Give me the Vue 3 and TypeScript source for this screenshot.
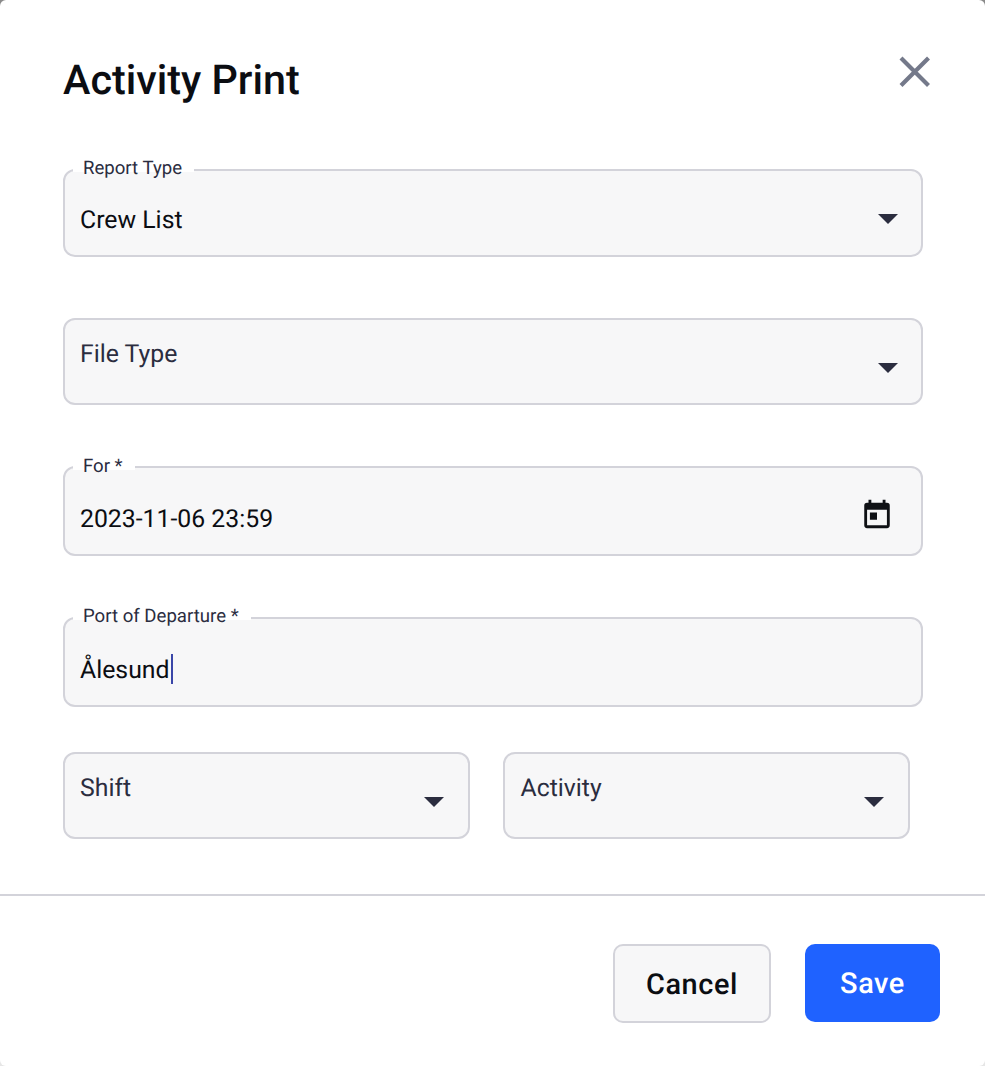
<script setup lang="ts">
const chevron = 'M0 0h20l-10 10z'
</script>

<template>
  <div class="backdrop">
    <div class="dialog">
      <header class="head">
        <h1 class="title">Activity Print</h1>
        <button class="close" aria-label="Close">
          <svg width="34" height="34" viewBox="0 0 34 34"><path d="M3 3 30.5 30.5M30.5 3 3 30.5" stroke="#74798a" stroke-width="4.2" fill="none" /></svg>
        </button>
      </header>
      <form class="form">
        <div class="field h88">
          <span class="legend">Report Type</span>
          <span class="value filled">Crew List</span>
          <svg class="caret wide" width="20" height="10" viewBox="0 0 20 10"><path :d="chevron" fill="#2b2d3f" /></svg>
        </div>
        <div class="field h87 gap empty">
          <span class="value">File Type</span>
          <svg class="caret wide" width="20" height="10" viewBox="0 0 20 10"><path :d="chevron" fill="#2b2d3f" /></svg>
        </div>
        <div class="field h90 gap">
          <span class="legend lower">For *</span>
          <span class="value filled low">2023-11-06 23:59</span>
          <svg class="calendar" width="34" height="36" viewBox="0 0 24 24"><path fill="#0f1115" d="M19 4h-1V2h-2v2H8V2H6v2H5a2 2 0 0 0-2 2v14a2 2 0 0 0 2 2h14a2 2 0 0 0 2-2V6a2 2 0 0 0-2-2zm0 16H5V9h14v11zM7 11h5v5H7z" /></svg>
        </div>
        <div class="field h90 gap">
          <span class="legend">Port of Departure *</span>
          <span class="value filled low">Ålesund<i class="cursor"></i></span>
        </div>
        <div class="row">
          <div class="field h87 half empty">
            <span class="value">Shift</span>
            <svg class="caret" width="20" height="10" viewBox="0 0 20 10"><path :d="chevron" fill="#2b2d3f" /></svg>
          </div>
          <div class="field h87 half empty">
            <span class="value">Activity</span>
            <svg class="caret" width="20" height="10" viewBox="0 0 20 10"><path :d="chevron" fill="#2b2d3f" /></svg>
          </div>
        </div>
      </form>
      <footer class="foot">
        <button class="btn cancel">Cancel</button>
        <button class="btn save">Save</button>
      </footer>
    </div>
  </div>
</template>

<style>
html, body { margin: 0; background: #fff; }
</style>

<style scoped>
.backdrop { width: 985px; height: 1066px; overflow: hidden; background: linear-gradient(#8a8a8a, #8a8a8a 50%, #e6e6e6 50%); }
.dialog {
  width: 985px; height: 1066px; box-sizing: border-box; background: #fff; border-radius: 6px;
  font-family: Roboto, "Liberation Sans", sans-serif; color: #0f1115; text-rendering: geometricPrecision;
  display: flex; flex-direction: column; position: relative;
}
.head { padding: 57px 54px 0 63px; display: flex; justify-content: space-between; height: 113px; box-sizing: border-box; }
.title { margin: 0; font-size: 41.3px; line-height: 48px; font-weight: 500; color: #0b0d12; }
.close { width: 34px; height: 34px; padding: 0; border: 0; background: none; position: absolute; right: 53px; top: 55px; }
.close svg { display: block; }
.form { padding: 56px 0 0 63px; display: flex; flex-direction: column; }
.field {
  position: relative; box-sizing: border-box; width: 860px; background: #f7f7f8;
  border: 2px solid #d3d3da; border-radius: 12px; display: flex; align-items: center; padding: 0 15px;
}
.h88 { height: 88px; } .h87 { height: 87px; } .h90 { height: 90px; }
.gap { margin-top: 61px; }
.empty .value { color: #2b2d3f; align-self: flex-start; margin-top: 19px; }
.value { font-size: 24.8px; line-height: 32px; }
.filled { color: #0b0d12; margin-top: 15px; }
.filled.low { margin-top: 17px; }
.legend {
  position: absolute; left: 8px; top: -13px; padding: 0 12px 0 10px; background: #fff; color: #2b2d3f;
  font-size: 18.6px; line-height: 21px; height: 14px;
}
.legend.lower { top: -12px; }
.caret { position: absolute; right: 24px; top: 43px; }
.caret.wide { right: 23px; }
.calendar { position: absolute; right: 27px; top: 28px; }
.cursor { display: inline-block; width: 2px; height: 30px; background: #3a46a8; vertical-align: -6px; margin-left: 1px; }
.row { display: flex; gap: 33px; margin-top: 45px; }
.half { width: 407px; }
.half + .half .value { margin-left: 0.5px; }
.foot {
  position: relative; margin-top: 55px; border-top: 2px solid #d3d3da; padding: 48px 45px 0 0;
  display: flex; justify-content: flex-end; align-items: flex-start; gap: 34px;
}
.btn { height: 79px; padding: 2px 0 0; border-radius: 10px; font-family: inherit; font-size: 28.9px; font-weight: 500; letter-spacing: 0.6px; text-rendering: geometricPrecision; }
.cancel { width: 158px; background: #f7f7f8; border: 2px solid #d3d3da; color: #0b0d12; }
.save { width: 135px; background: #1f62ff; border: 0; color: #fff; height: 78px; }
</style>
